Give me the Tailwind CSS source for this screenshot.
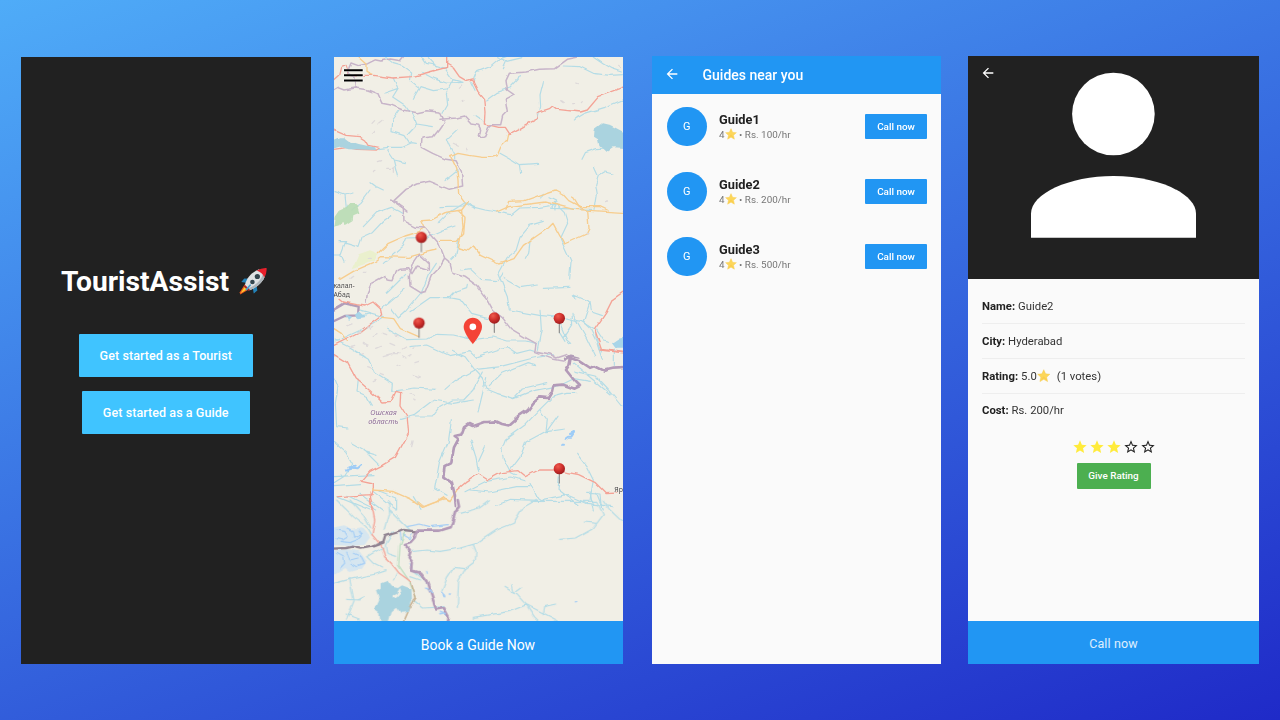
<!DOCTYPE html>
<html lang="en">
<head>
<meta charset="utf-8">
<title>TouristAssist</title>
<script src="https://cdn.jsdelivr.net/npm/@tailwindcss/browser@4"></script>
</head>
<body class="font-['Roboto',sans-serif]">
<svg class="hidden">
  <defs>
    <symbol id="back" viewBox="0 0 24 24"><path d="M20 11H7.83l5.59-5.59L12 4l-8 8 8 8 1.41-1.41L7.83 13H20v-2z"/></symbol>
    <symbol id="star" viewBox="0 0 24 24"><path d="M12 17.27 18.18 21l-1.64-7.03L22 9.24l-7.19-.61L12 2 9.19 8.63 2 9.24l5.46 4.73L5.82 21z"/></symbol>
    <symbol id="star-o" viewBox="0 0 24 24"><path d="m22 9.24-7.19-.62L12 2 9.19 8.63 2 9.24l5.46 4.73L5.82 21 12 17.27 18.18 21l-1.63-7.03L22 9.24zM12 15.4l-3.76 2.27 1-4.28-3.32-2.88 4.38-.38L12 6.1l1.71 4.04 4.38.38-3.32 2.88 1 4.28L12 15.4z"/></symbol>
    <symbol id="emoji-star" viewBox="0 0 24 24"><path d="M12 1.2 15.3 8.6l7.5.7-5.7 5.3 1.7 7.8L12 18.3l-6.8 4.1 1.7-7.8L1.2 9.3l7.5-.7z" fill="#fcd65a" stroke="#f7c948" stroke-width=".8" stroke-linejoin="round"/><path d="M12 4v9l6 7-6-3.500-5.500 3.500 5.500-7z" fill="#f5bd37" opacity=".4"/></symbol>
  </defs>
</svg>
<main class="flex h-[720px] w-[1280px] items-start overflow-hidden bg-[linear-gradient(160deg,#4facf8_0%,#1f2ac8_100%)] pt-14 pl-[21px]">

  <!-- Welcome -->
  <section class="mt-px flex h-[606.500px] w-[289.500px] flex-col items-center bg-[#212121] pt-[207px]">
    <h1 class="mr-[3px] flex h-9 items-center gap-[10px] text-[28.200px] font-bold text-white">TouristAssist
      <svg class="-mt-px size-[28.500px]" viewBox="0 0 87 87">
        <path d="M31 36 16 35 7 46l14 2zM54 58l2 14-11 9-3-17z" fill="#2382b8"/>
        <path d="M18 53 2 78l2 6 27-16z" fill="#f05a1c"/>
        <path d="M19 58 5 80l21-13z" fill="#ffd22e"/>
        <path d="M18 55c6-24 22-39 43-48L80 27C73 47 56 62 33 71z" fill="#dfe2e4"/>
        <path d="M33 71C56 62 73 47 80 27l-7-5C67 43 45 60 26 65z" fill="#aeb5ba"/>
        <path d="M54 11Q69 2 84 3q2 14-7 29-5-15-23-21z" fill="#e8202b"/>
        <path d="m18 55-3 5 14 13 5-3z" fill="#a92429"/>
        <circle cx="56" cy="29" r="8" fill="#34464f"/><circle cx="41" cy="46" r="7" fill="#34464f"/>
        <path d="M34 52 19 69l5 3 13-16z" fill="#4a9fce"/>
      </svg>
    </h1>
    <div class="mt-[34px] flex h-[43px] w-[174px] items-center justify-center rounded-[1px] bg-[#40c4ff] pt-[1.500px] text-[12.500px] font-medium tracking-[0.08px] text-white">Get started as a Tourist</div>
    <div class="mt-[14px] flex h-[43px] w-[168px] items-center justify-center rounded-[1px] bg-[#40c4ff] pt-[1.500px] text-[12.500px] font-medium tracking-[0.08px] text-white">Get started as a Guide</div>
  </section>

  <!-- Map -->
  <section class="mt-px ml-[23.500px] flex h-[607px] w-[289px] flex-col">
    <svg class="h-[564px] w-[289px] shrink-0" viewBox="334 57 289 564" fill="none" stroke-linejoin="round" stroke-linecap="round">
      <defs>
        <radialGradient id="ball" cx=".38" cy=".3" r=".75"><stop offset="0" stop-color="#ee5b4f"/><stop offset=".5" stop-color="#d0302c"/><stop offset="1" stop-color="#961a1c"/></radialGradient>
        <g id="pin"><path d="M0 13v30" stroke="#8d8d8d" stroke-width="3.500"/><circle r="17" fill="url(#ball)"/></g>
        <filter id="terrain" filterUnits="userSpaceOnUse" x="330" y="50" width="300" height="580" color-interpolation-filters="sRGB">
          <feTurbulence type="fractalNoise" baseFrequency=".11" numOctaves="1" seed="4"/>
          <feDisplacementMap in="SourceGraphic" scale="4.5" xChannelSelector="R" yChannelSelector="G"/>
          <feGaussianBlur stdDeviation=".35"/>
        </filter>
      </defs>
      <rect x="334" y="57" width="289" height="564" fill="#f1efe6"/>

      <g filter="url(#terrain)">
      <g transform="translate(330 50) scale(.33333)">
        <g stroke="#b4dce6" stroke-width="3.500">
          <path d="M165 20l22 18 30 8 28 20-4 28 22 18M190 85l14 30-16 26 36 24 16 22M204 115l-40 14M345 55l-30-10-20-22M345 55l24 34 30 8-50 2-40-14-34-18M369 89l-20 40 4 36-14 25M275 20l14 20 26 5M250 145l20-35 40 12 40-5M430 90l10-25 40-16 24-20 26-10M500 20l30 14 50-12M530 34l-10 22M435 118l-10-20M470 150l30-22 40-14 24-25 4-10M700 48l50 2 40 20 50 6 40-2M790 22l30 20 24 14 30 10M640 95l-10 40 2 35-10 40M735 208l30-18 60-18 52-22M745 200l-12 10M432 195l30 20"/>
          <path d="M210 180l-22 30-2 35 36 12 14 20M246 186l14 36 50 8M260 222l-28 30M145 296l30-4 40 0 30-14 14 2M170 300l20 30 36 8M190 330l12 48M378 242l-26 24 8 20 14 26 0 14M385 360l-40 32M510 310l30 16 28 18 4 26M568 344l58-4M800 296l-34 12-10 20M800 296l26-2M793 352l12 26-8 25 5 30-7 45M805 378l20-12 24 6M15 425l30 10 24-6M45 435l4 40M120 420l-30 40-25 20M120 398l18 14M160 420l-20-10M330 470l70-2 14-10 20 18M640 430l-8 14M660 440l20 10-15 25 120 3"/>
        </g>
        <g stroke="#f4a396" stroke-width="4">
          <path d="M6 94l20-18 6-24 16-6 10 28 40 2 34 0 58 8 58-4 50-14 52-14 0-34M350 42l20 12 18 26 24 14 16-4 16 32 20 24 4 40-2 36 40 10 20 0 16 24M536 254l30-16 34-20 24-12-2-18 36-12 10-8 14 10 70 8 20-6 34-40 80-30"/>
          <path d="M6 238l42 18 40 4 16 10 10 16 30 6-4 8-60-2-30-6-38 6"/>
        </g>
        <g stroke="#c7b4c9" stroke-width="4.500">
          <path d="M225 14l-14 18-30-5-26 6-18-4-24 12-28 6-22-8-10 24 22 16 4 36M6 122l16-10 20 8 34-6 40 6 26 10 14 30 30 6 32 14 44 8 28-6 40 4 14 28-18 26-16 20-34 4-2 28 34 18 40 18 30 4 16 32 4 44-40 10-58-24-40 8-32 16-36 34 42 34M330 208l50-4 24-6 22 24 20 4 6 12-4 20 6 6 10-4 12-28 10-8 26 0 6-26 14-14-6-36 26-14-20-14-4-28 10-22 50-4 40-8 46-2 38-28 30-6"/>
        </g>
        <path stroke="#f7cd8e" stroke-width="4" d="M78 16l30 26 0 22 20 10M536 254l-4 18-20 20-10 24-20 6-26 0-40-6-32-6-22 10 18 36 4 38 2 40 20 26M528 478l8-24 48-2 50-18 42-14 22 12 18 20 34 18 60 0 22 10"/>
        <path fill="#aad3df" d="M4 272l24-10 14 0 14 10 30 10 46 10 4 8-80-2-28-8-24 8zM794 236l22-16 26 6 46 24v44l-40-2-20 14-20-18-4-20-12-8z"/>
        <g stroke="#ddd8d9" stroke-width="3.500"><path d="M126 220l8-8M146 222l10-8M126 250l10-10M385 118l10-10M393 155l6-4M695 152l8 6M728 158h6M754 158l3-3M370 280l12 6M410 298l3 4M145 335l10-3M170 355l20 0M190 352v18M130 365l8-4M740 96l5 2M826 455l6-2M866 46l6 6"/></g>
      </g>

      <g transform="translate(330 200) scale(.33333)">
        <g stroke="#b4dce6" stroke-width="3.500">
          <path d="M6 165l26 0 15-40-20 0M32 165l10 22M47 130l40 12 10-30 30-14 30-32 28-20M100 80l40-42 44-16 24 12 14 8M325 70l30-30 50-32 20 12 40 10 80 14 24-20 60-2 50-8 24 24 10 32-22 46 32 70-4 48M675 30l-2-26M375 78l-40 14-45 20-60 2-10 24-60 52M387 115l-10 50-14 14M640 64l-40 12-30 36-12 40-30 24-24 44 12 30 16 40 6 40 90 16 80 8 45 10 40 25 14 60 10 30M600 120l-4 40-10 18M520 235l50 28 52-8M640 265l80-3M395 210l25-4 34 32 50 4 14-20M170 280l40-40 20-20M240 335l60-42 60 0 30 6 35 44 60 16M360 295l20-22 30-10 2-10M185 328l20 26 20-18 50-60 20-50 24-36M155 325l70-60"/>
          <path d="M170 385l60 34 60-2 30-14 50 2 60 14 60-8 40 12 60 0 30 8M240 440l50-5 70 32 60-12 20 20M440 470l60-20 30-10 30 20 40-10 24 8M630 328l4 60-12 60M690 370l20 50 12 10M726 340l2 30-28 42M740 300l-10-16 50 22 5 30 30 10M780 306l-20 60 20 20 35 70M730 345l40 70 24 50M800 390l20 30 18 4M690 400l15 24M90 330l70 20-60 36-85 40M120 340l-30 10M15 420l40 20 50 30"/>
        </g>
        <path fill="#b8dcb4" opacity=".9" d="M14 50l14-20 22-10 8-8 18 0 6 6 6 20-18 8-2 14-22 14-10-12-8 14-18 4z"/>
        <path fill="#eaf0cd" d="M68 205l18-42 34-12 26 10-14 18-30 14z"/>
        <g stroke="#f7cd8e" stroke-width="4">
          <path d="M30 238l40-24 60-26 24-18 80 2 50-14 34-8M145 158l30-28 50-22 40-12 20-12-10-22 30-2 40-22 50-8 20-26M385 32l20 20-4 50-20 22-50 0M395 32l4 50-14 62 30 8 16-14 20 28 55 26 46-16 28-40 40-28 35-24 14-14 34 62 66-30 8-16-4-54-28-12-20-32M500 36l36-16 110-14 84 22 158 10"/>
          <path d="M6 382l28 18 18 24M155 352l36 4 20 30 55 24"/>
        </g>
        <g stroke="#c7b4c9" stroke-width="4.500">
          <path d="M182 0l38 24 2 40 34 18 30 2 40 46 18 44 12 10 10 36 40 12 34 24 30 40 20 36 26 20 26 34 50 30 26 14-4 28 50 18 40 8M344 174l-20 34-20 20-18 46-14 4-32-20-2-30 16-44 14-20 30 28 0 18-36-12-16 26-10-18-26 2-14 8-10 26-18-2-4-12-40 22-12 28-4 30"/>
        </g>
        <path stroke="#a78eb0" stroke-width="7" opacity=".85" d="M6 332l38-22 42 10-2 26-40 2-38 18M705 476l18-9 22 6"/>
        <g stroke="#f4a396" stroke-width="4"><path d="M30 298l10 8 40 8 25 4 24-12 22 20 4 18-40 30-34 28-75 37M888 270l-40 28-20 40-34 50 20 60 74 10"/></g>
        <path fill="#a8d5e8" d="M74 345l14-12 20 18-22 4zM46 344l18 6-10 10zM846 430l20-14 20-4v34l-28 0z"/>
        <g stroke="#dedadb" stroke-width="4"><path d="M100 217h10M115 172h6M60 238l8-6M35 260l6-3M830 3h2M768 100l6 2M50 375l16-6M80 400l10-6M110 378l12 4M130 410l14-6M160 400l10 4M60 440l14-4M100 430l12 6M140 445l14-6M180 430l14 6M220 450l10-6M90 465l10-4M170 465l16-4M215 470l10 4M252 445l8-4M120 385l8-6M195 405l10 2"/></g>
      </g>

      <g transform="translate(330 350) scale(.33333)">
        <g stroke="#b4dce6" stroke-width="3.500">
          <path d="M75 4l40 24 18 38 54 34-2 24 70-10 60 4M12 80l12 30-8 50 4 70 34 4M85 90l-4 36 30 14 16 26M365 0l40 20 30 40 22 24 14 34 30 12 50 16 60-24 80-16 40-20 50 8M435 60l-60 32-30 26M457 66l-28 54-28 30-34 0-40 22-20 26-60 0-36 10M430 150l-60 10-60-10-60 46M470 80l-26 106M440 58l70-8 100-26 60-10M475 110l40-40 80-32 20 6M550 146l30-32 70-16M735 64l60 14 40 42 44 54M730 40l60 50 50 42M850 0l0 46M740 130l-30 0-44 12-40 40-40 42-60 44-10 26 4 34 20 38 20 10M630 180l22 30-4 34-60 32-18 46-30 40M650 245l56-8M684 196l-34 48M422 270l14 46 10 48M466 290l-20 44M364 212l-8 60-28 66-14 78 34 20M740 310l30 40 20 40-10 60"/>
          <path d="M14 278l34 30 20 34-24 36-32 20M65 282l44 24 32 10M108 306l38 38M12 380l120-6M12 410l80-6M20 440l100 40M50 436l90 44M90 430l70 50M130 425l70 55M150 424l50 20 0 36M250 440l24 40M405 425l60-30 80-14 40 12M420 420l60 6 80-16 40 0M600 400l16 34 26 18-100-4-45 18M640 448l70-14 60 26 80 10M688 378l-4 40 60 46M770 430l40 2 4 40M780 425l10 55M800 430l20 50"/>
        </g>
        <g stroke="#f4a396" stroke-width="4"><path d="M6 10l46 28 26 48 40 34 38 36 28-2 14-30 14 4-2 40 22 36 4 46-20 36-20 36-40 24-36 18-26 30 36 8 0 14-4 18-100 6M120 426l6 54M380 420l26-22 40-26 28 18 40-22 50-6 22 18 40-20 50 0 70 14 50 24 30 30 40-2M810 0l78 9"/></g>
        <path stroke="#f7cd8e" stroke-width="4" d="M128 420l60 4 50 22 40 26 40-16 22-14 20 10 20-30"/>
        <path stroke="#c7b4c9" stroke-width="5" d="M620 4l40 8 20 12 30-10"/>
        <path stroke="#b39ab8" stroke-width="8" d="M888 54l-40 2-26 6-28-14-16 6-30-20-26-10-4 20-10 16 24 30 18 18-16 8-34-12-30 2-4 18-12 20-24-2-20 16-16 22-24 16-34 30-20-4-18-8-22 2-14 0-34 12-12-6-14 10-8 22-20 4 12 8-14 26-4 22-4 24-20 10-4 32 26 18 8 36 4 34"/>
        <path stroke="#9dccf7" stroke-width="6" d="M48 362l18-6 14 2 14-12M58 352l16-2M704 268l10-8 10 0 8-12M694 284h8M720 252l12-6"/>
        <g stroke="#dedadb" stroke-width="4"><path d="M190 8l20 0M235 18l8-4M255 38l12-4M200 45l10 4M150 70l10 4M250 75l18 6M130 95l8-4M160 20l14-4M240 132l10 4M110 50l12 4M246 270l-4 20M248 150l6 4"/></g>
      </g>

      <g transform="translate(330 500) scale(.33333)">
        <path fill="#cbe3f4" opacity=".7" d="M4 84l38-8 24 10 30-4 24 30-16 22-40 4-60-4zM4 152l48-4 36 6 22 30-14 22-36 10-14-12-42 26z"/>
        <path stroke="#a5cdf5" stroke-width="3.500" d="M20 90l24 4 10 16-16 10-20-4M54 84l16 8 4 20 20-12M84 90l10 14-14 16M30 124l30 4 20-8M20 160l20 10 4 20-14 14M50 156l10 24 24-6M70 160l24 10 10 20-20 6M60 190l20 10M230 80l40-8 30 8 52-6M220 104l20 12 6-16M210 96l4 22M240 190l10 14M290 214l2 6M286 264l8 4M336 284l4 4M344 340l8 8M334 276l10 10M330 336l20 8"/>
        <g stroke="#b4dce6" stroke-width="3.500">
          <path d="M20 0l50 50 38 30 14 24M60 0l40 45 22 38M175 0l4 40-14 50M180 30l60 60M190 95l-24 40 4 24 30 10M160 140l-50 30 20 20 28 14M250 154l40-4 40 4 60-10 50-14 60-40 50-20 30-50 40-22M430 134l8 20-2 30-30 22-20 36-4 80M406 206l-34-4-20 30-16 40M388 40l60-16 30-22M600 4l100 0 40 0 60 0 20 40-30 40-54 30-44 4M760 66l40 4M820 4l20 26 36 34M12 250l46-12 80-16 30-10M58 232l14 70-14 36-8 20M50 298l40 2M48 342l40 15M525 262l36 22 18 20 10 10 24 36 12 12M546 254l6 24 20-14M590 314l-50 20-60 10-50 8 0 6M590 314l60 30 34 18M640 340l4-20 36-8M245 210l40 30 20 40M250 300l30 24 62-4M190 240l10-20M80 300l20-10M242 230l30 10"/>
        </g>
        <path stroke="#b7dcbd" stroke-width="3.500" d="M224 96l-14 40-4 60 34 50 18 44"/>
        <path stroke="#f4a396" stroke-width="4" d="M122 0l12 60-8 44 30 36 8 30 20 20 24 30 36 26"/>
        <path stroke="#c3a985" stroke-width="4" d="M244 248l14 44-20 34-20 46"/>
        <path stroke="#f7cd8e" stroke-width="4" d="M262 6l20 14 24-10 30-10M330 0l20-4 10 6"/>
        <path stroke="#8f8290" stroke-width="7" d="M6 146l42-2 20-4 26 6 32-6 34-12 6-20 40-12 14-6 40 4"/>
        <path stroke="#b39ab8" stroke-width="8" d="M386 0l4 20-14 16-14 46-34 10-68 0-6 20-12 14-20 6 20 20-6 20 12 16-2 24 24 6 20 26 10 30 14 40 4 14 24-4 14 26-4 26-14 2-14-6-14 8-6 10"/>
        <path fill="#aad3df" d="M152 250l20-8 14 18 18 4 12-8 28 10 2 34-10 36-24 2-14-18-16 14-8 28v10h-22l-4-32-14-10 14-30-10-26 14-8z"/>
        <path fill="#f1efe6" d="M188 286l10-4 12-18 4 10-16 18-10 4z"/>
        <path stroke="#a5cdf5" stroke-width="5" d="M338 284l6 6M740 308l3-2M358 282h3M330 344l18-4M298 270l6 10"/>
      </g>
      </g>

      <g font-family="'Noto Sans', sans-serif" stroke="#f4f1ea" stroke-width="1.500" paint-order="stroke">
        <text x="333.500" y="288.200" font-size="6.800" fill="#4a4a4a">калал-</text>
        <text x="333.500" y="296.500" font-size="6.800" fill="#4a4a4a">Абад</text>
        <g fill="#8f6f9a" font-style="italic" font-size="7.400" text-anchor="middle"><text x="383.500" y="414.800">Ошская</text><text x="383.300" y="424">область</text></g>
        <text x="614.300" y="492.300" font-size="7" fill="#4a4a4a">Яр</text>
      </g>

      <g transform="translate(330 200) scale(.33333)">
        <use href="#pin" x="274" y="112"/><use href="#pin" x="267" y="369"/><use href="#pin" x="493" y="354"/><use href="#pin" x="688" y="355"/><use href="#pin" x="688" y="806"/>
        <path fill="#f44336" d="M428.500 353c-15 0-27.500 12-27.500 27.500 0 20 27.500 52 27.500 52s27.500-32 27.500-52c0-15.500-12.500-27.500-27.500-27.500z"/>
        <circle cx="428.500" cy="380.500" r="10" fill="#fff"/>
      </g>
      <path d="M344 70.300h18.700M344 75.300h18.700M344 80.500h18.700" stroke="#fff" stroke-width="3" opacity=".5"/>
      <path d="M344 70.300h18.700M344 75.300h18.700M344 80.500h18.700" stroke="#000" stroke-width="2" stroke-linecap="butt"/>
    </svg>
    <div class="flex h-[43px] items-center justify-center bg-[#2196f3] pt-[5px] pr-px text-[14px] text-white">Book a Guide Now</div>
  </section>

  <!-- Guides list -->
  <section class="ml-[29px] h-[608px] w-[289px] bg-[#fafafa]">
    <header class="flex h-[38px] items-center bg-[#2196f3] pl-[11.500px] text-white">
      <svg class="-mt-[2px] size-4" fill="currentColor"><use href="#back"/></svg>
      <h2 class="ml-[23px] text-[14px] font-medium">Guides near you</h2>
    </header>
    <ul>
      <li class="flex h-[65px] items-center pr-[14px] pl-[15px]">
        <div class="flex size-[39.500px] items-center justify-center rounded-full bg-[#2196f3] pt-[1.500px] text-[11px] text-white">G</div>
        <div class="ml-[12.500px] grow"><div class="text-[12.800px] leading-[16px] font-bold text-[#212121]">Guide1</div>
          <div class="flex items-center text-[9.900px] leading-[14px] text-[#757575]">4<svg class="size-3 -translate-y-px"><use href="#emoji-star"/></svg><span class="ml-[2.500px]">• Rs. 100/hr</span></div></div>
        <div class="flex h-[25px] w-[62px] items-center justify-center rounded-[1px] bg-[#2196f3] pt-[1.500px] text-[9.900px] font-medium text-white">Call now</div>
      </li>
      <li class="flex h-[65px] items-center pr-[14px] pl-[15px]">
        <div class="flex size-[39.500px] items-center justify-center rounded-full bg-[#2196f3] pt-[1.500px] text-[11px] text-white">G</div>
        <div class="ml-[12.500px] grow"><div class="text-[12.800px] leading-[16px] font-bold text-[#212121]">Guide2</div>
          <div class="flex items-center text-[9.900px] leading-[14px] text-[#757575]">4<svg class="size-3 -translate-y-px"><use href="#emoji-star"/></svg><span class="ml-[2.500px]">• Rs. 200/hr</span></div></div>
        <div class="flex h-[25px] w-[62px] items-center justify-center rounded-[1px] bg-[#2196f3] pt-[1.500px] text-[9.900px] font-medium text-white">Call now</div>
      </li>
      <li class="flex h-[65px] items-center pr-[14px] pl-[15px]">
        <div class="flex size-[39.500px] items-center justify-center rounded-full bg-[#2196f3] pt-[1.500px] text-[11px] text-white">G</div>
        <div class="ml-[12.500px] grow"><div class="text-[12.800px] leading-[16px] font-bold text-[#212121]">Guide3</div>
          <div class="flex items-center text-[9.900px] leading-[14px] text-[#757575]">4<svg class="size-3 -translate-y-px"><use href="#emoji-star"/></svg><span class="ml-[2.500px]">• Rs. 500/hr</span></div></div>
        <div class="flex h-[25px] w-[62px] items-center justify-center rounded-[1px] bg-[#2196f3] pt-[1.500px] text-[9.900px] font-medium text-white">Call now</div>
      </li>
    </ul>
  </section>

  <!-- Guide profile -->
  <section class="ml-[27px] flex h-[608px] w-[291px] flex-col bg-[#fafafa]">
    <svg class="h-[222.500px] w-[291px] shrink-0 bg-[#212121]" viewBox="0 0 291 222.500" fill="#fff">
      <use href="#back" x="12" y="9" width="16" height="16"/>
      <circle cx="145.400" cy="58" r="41.300"/>
      <path d="M63 181.700v-24c0-20 38-37.700 82.500-37.700s82.500 17.700 82.500 37.700v24z"/>
    </svg>
    <div class="mx-[14px] mt-[11px] text-[11.300px] text-[#333]">
      <p class="flex h-[34.700px] items-center border-b border-[#eee] pt-[2.500px]"><b class="mr-[3px] font-bold text-[#212121]">Name:</b>Guide2</p>
      <p class="flex h-[34.700px] items-center border-b border-[#eee] pt-[2px]"><b class="mr-[3px] font-bold text-[#212121]">City:</b>Hyderabad</p>
      <p class="flex h-[34.700px] items-center border-b border-[#eee] pt-[3px]"><b class="mr-[3px] font-bold text-[#212121]">Rating:</b>5.0<svg class="mr-[6px] ml-[0.500px] size-[13.500px] -translate-y-px"><use href="#emoji-star"/></svg>(1 votes)</p>
      <p class="flex h-[34.700px] items-center pt-[2px]"><b class="mr-[3px] font-bold text-[#212121]">Cost:</b>Rs. 200/hr</p>
    </div>
    <div class="mt-[10.500px] flex justify-center gap-px text-[#ffeb3b]" >
      <svg class="size-4" fill="currentColor"><use href="#star"/></svg>
      <svg class="size-4" fill="currentColor"><use href="#star"/></svg>
      <svg class="size-4" fill="currentColor"><use href="#star"/></svg>
      <svg class="size-4" fill="#212121"><use href="#star-o"/></svg>
      <svg class="size-4" fill="#212121"><use href="#star-o"/></svg>
    </div>
    <div class="mx-auto mt-[8px] flex h-[26px] w-[74px] items-center justify-center rounded-[1px] bg-[#4caf50] pt-[1.500px] text-[9.900px] font-medium text-white">Give Rating</div>
    <div class="mt-auto flex h-[43px] items-center justify-center bg-[#2196f3] pt-[4.500px] text-[12.500px] tracking-[0.15px] text-white/85">Call now</div>
  </section>
</main>
</body>
</html>
